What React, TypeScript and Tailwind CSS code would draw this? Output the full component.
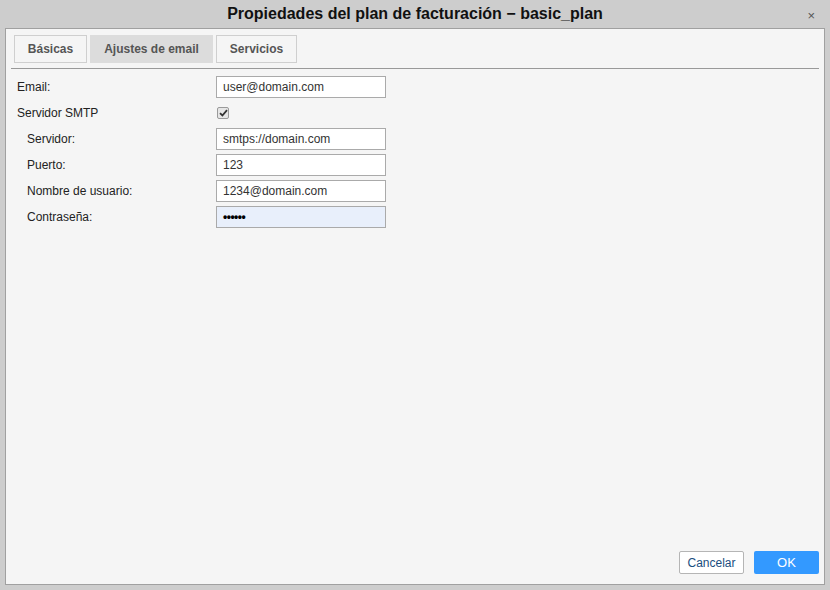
import React from "react";

const font = { fontFamily: '"Liberation Sans", Arial, sans-serif' };

function Row({ label, indent, children }: { label: string; indent?: boolean; children: React.ReactNode }) {
  return (
    <div className="flex items-center h-[22px]">
      <div className={`w-[199px] text-[12px] text-[#222] ${indent ? "pl-[10px]" : ""}`}>{label}</div>
      {children}
    </div>
  );
}

function Input({ value, active, password }: { value: string; active?: boolean; password?: boolean }) {
  return (
    <div
      className={`w-[170px] h-[22px] border border-[#aaaaaa] flex items-center px-[6px] text-[12px] text-[#333] ${
        active ? "bg-[#e8effb]" : "bg-white"
      }`}
    >
      {password ? <span className="text-[12px] tracking-[-0.5px] text-black font-bold">••••••</span> : value}
    </div>
  );
}

export default function App() {
  return (
    <div className="w-[830px] h-[590px] bg-[#cdcdcd] flex flex-col" style={font}>
      <div className="relative h-[28px] flex items-center justify-center">
        <span className="text-[16px] font-bold text-[#111]">Propiedades del plan de facturación − basic_plan</span>
        <span className="absolute right-[15px] top-[6px] text-[13px] text-[#555]">×</span>
      </div>
      <div className="mx-[5px] mb-[5px] flex-1 border border-[#a0a0a0] bg-[#f5f5f5] flex flex-col">
        <div className="flex gap-[3px] pl-[8px] pt-[6px]">
          <div className="h-[28px] w-[73px] border border-[#cfcfcf] flex items-center justify-center text-[12px] font-bold text-[#555]">
            Básicas
          </div>
          <div className="h-[28px] w-[123px] bg-[#dcdcdc] flex items-center justify-center text-[12px] font-bold text-[#555]">
            Ajustes de email
          </div>
          <div className="h-[28px] w-[81px] border border-[#cfcfcf] flex items-center justify-center text-[12px] font-bold text-[#555]">
            Servicios
          </div>
        </div>
        <div className="mx-[5px] mt-[5px] h-px bg-[#999999]" />
        <div className="flex flex-col gap-[4px] pl-[11px] pt-[7px]">
          <Row label="Email:">
            <Input value="user@domain.com" />
          </Row>
          <div className="flex items-center h-[26px] -my-[2px]">
            <div className="w-[199px] text-[12px] text-[#222]">Servidor SMTP</div>
            <div className="ml-[1px] w-[12px] h-[12px] border border-[#9a9a9a] rounded-[2px] bg-[#e6e6e6] flex items-center justify-center">
              <svg width="9" height="8" viewBox="0 0 9 8">
                <path d="M1 4.2 L3.4 6.5 L8 1.2" stroke="#333" strokeWidth="1.8" fill="none" />
              </svg>
            </div>
          </div>
          <Row label="Servidor:" indent>
            <Input value="smtps://domain.com" />
          </Row>
          <Row label="Puerto:" indent>
            <Input value="123" />
          </Row>
          <Row label="Nombre de usuario:" indent>
            <Input value="1234@domain.com" />
          </Row>
          <Row label="Contraseña:" indent>
            <Input value="" active password />
          </Row>
        </div>
        <div className="flex-1" />
        <div className="flex justify-end gap-[10px] pr-[5px] pb-[10px]">
          <div className="w-[65px] h-[23px] border border-[#b5b5b5] rounded-[2px] bg-white flex items-center justify-center text-[12px] text-[#1a4e80]">
            Cancelar
          </div>
          <div className="w-[65px] h-[23px] rounded-[2px] bg-[#3399ff] flex items-center justify-center text-[13px] text-white">
            OK
          </div>
        </div>
      </div>
    </div>
  );
}
